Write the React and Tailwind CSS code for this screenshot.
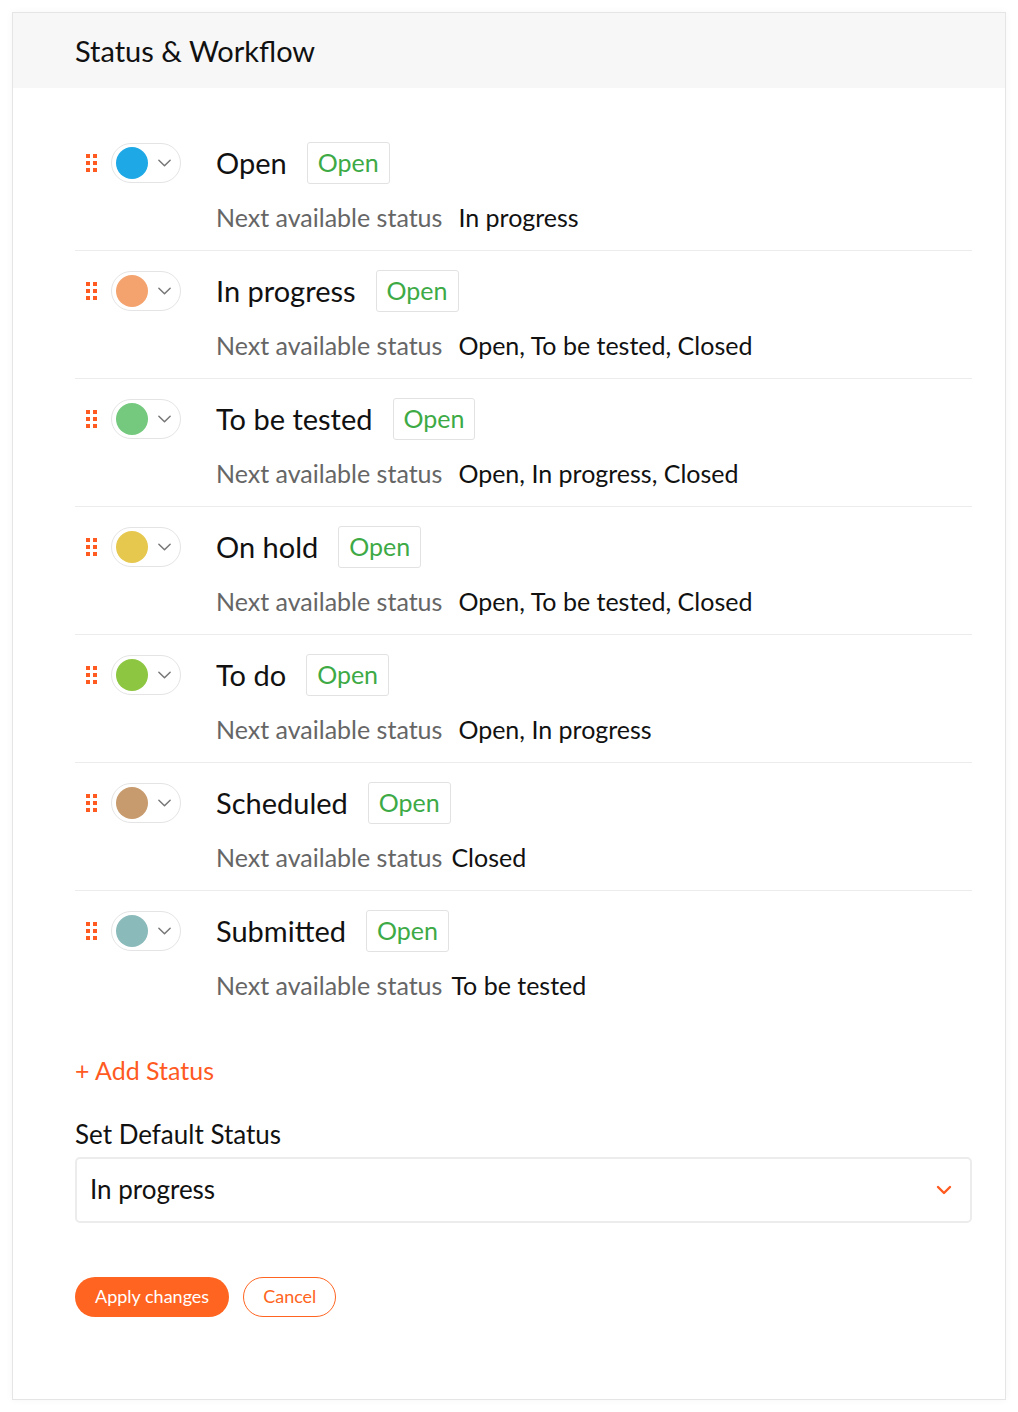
import React from 'react'

const statuses = [
  { name: 'Open', color: 'bg-[#1ea9e6]', next: 'In progress', gap: 'ml-4' },
  { name: 'In progress', color: 'bg-[#f4a36f]', next: 'Open, To be tested, Closed', gap: 'ml-4' },
  { name: 'To be tested', color: 'bg-[#74c97e]', next: 'Open, In progress, Closed', gap: 'ml-4' },
  { name: 'On hold', color: 'bg-[#e6c84f]', next: 'Open, To be tested, Closed', gap: 'ml-4' },
  { name: 'To do', color: 'bg-[#8dc641]', next: 'Open, In progress', gap: 'ml-4' },
  { name: 'Scheduled', color: 'bg-[#c79b6d]', next: 'Closed', gap: 'ml-[9px]' },
  { name: 'Submitted', color: 'bg-[#8bbabb]', next: 'To be tested', gap: 'ml-[9px]' }
]

function DragHandle() {
  return (
    <div className="grid grid-cols-2 gap-x-[3px] gap-y-[3px]">
      {[0, 1, 2, 3, 4, 5].map(i => (
        <span key={i} className="block w-[4px] h-[4px] bg-[#ff5a1f]" />
      ))}
    </div>
  )
}

function Chevron({ className, stroke = '#777', width = 1.6 }) {
  return (
    <svg viewBox="0 0 16 10" className={className} fill="none">
      <polyline points="2,2 8,8 14,2" stroke={stroke} strokeWidth={width} strokeLinecap="round" strokeLinejoin="round" />
    </svg>
  )
}

function StatusRow({ item, last }) {
  return (
    <div className={`flex pt-[19px] pb-[17px] ${last ? '' : 'border-b border-[#ececec]'}`}>
      <div className="flex items-center h-[42px] pl-[11px]">
        <DragHandle />
        <div className="ml-[14px] flex items-center w-[70px] h-[40px] rounded-full border border-[#e4e4e4] pl-[4px]">
          <span className={`block w-[32px] h-[32px] rounded-full ${item.color}`} />
          <Chevron className="ml-[9px] w-[15px] h-[10px]" />
        </div>
      </div>
      <div className="ml-[35px] flex flex-col">
        <div className="flex items-center h-[42px]">
          <span className="text-[29px] text-[#111]">{item.name}</span>
          <span className="ml-[20px] h-[42px] flex items-center px-[10px] border border-[#e2e2e2] rounded-[3px] text-[25px] text-[#3daa46]">
            Open
          </span>
        </div>
        <div className="mt-[19px] h-[30px] flex items-center text-[25px]">
          <span className="text-[#666]">Next available status</span>
          <span className={`${item.gap} text-[#111]`}>{item.next}</span>
        </div>
      </div>
    </div>
  )
}

export default function App() {
  return (
    <div className="min-h-screen bg-white p-[12px] font-['Lato','Noto_Sans',sans-serif]">
      <div className="border border-[#e5e5e5] bg-white shadow-[0_0_8px_rgba(0,0,0,0.04)] min-h-[1388px]">
        <div className="bg-[#f7f7f7] h-[75px] flex items-center pl-[62px]">
          <h1 className="text-[29px] text-[#111]">Status &amp; Workflow</h1>
        </div>

        <div className="pl-[62px] pr-[33px]">
          <div className="pt-[35px]">
            {statuses.map((s, i) => (
              <StatusRow key={s.name} item={s} last={i === statuses.length - 1} />
            ))}
          </div>

          <div className="mt-[34px] text-[25px] text-[#ff5a1f]">+ Add Status</div>

          <div className="mt-[25px] text-[26px] text-[#111]">Set Default Status</div>
          <div className="mt-[3px] h-[66px] border-2 border-[#ececec] rounded-[5px] flex items-center justify-between pl-[13px] pr-[18px]">
            <span className="text-[26px] text-[#111]">In progress</span>
            <Chevron className="w-[16px] h-[10px]" stroke="#ff5a1f" width={2.4} />
          </div>

          <div className="mt-[54px] flex items-center gap-[14px]">
            <button className="h-[40px] px-[20px] rounded-full bg-[#ff6420] text-white text-[18px]">
              Apply changes
            </button>
            <button className="h-[40px] px-[19px] rounded-full border border-[#ff6420] text-[#ff6420] text-[18px] bg-white">
              Cancel
            </button>
          </div>
        </div>
      </div>
    </div>
  )
}
